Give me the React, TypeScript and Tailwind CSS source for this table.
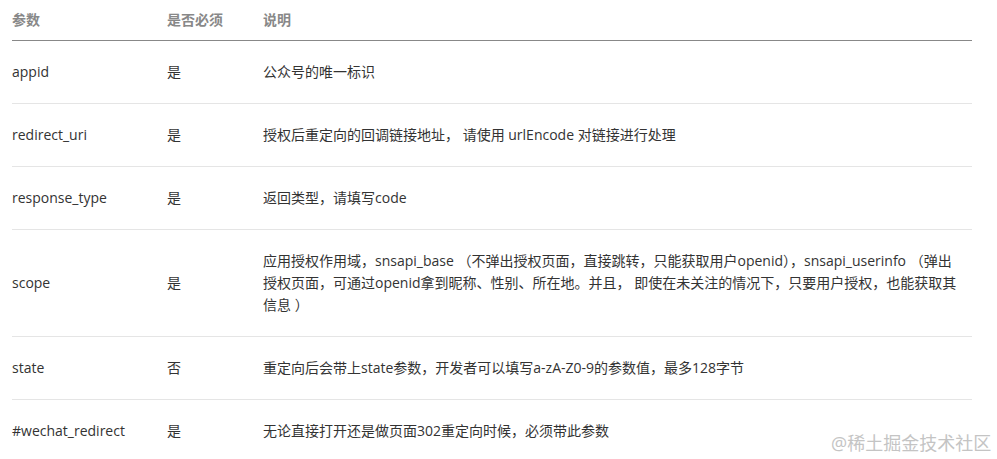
import React from "react";

const font = { fontFamily: '"Open Sans", "Noto Sans CJK SC", sans-serif' };

type Row = { name: string; req: string; desc: React.ReactNode };

const rows: Row[] = [
  { name: "appid", req: "是", desc: "公众号的唯一标识" },
  { name: "redirect_uri", req: "是", desc: "授权后重定向的回调链接地址， 请使用 urlEncode 对链接进行处理" },
  { name: "response_type", req: "是", desc: "返回类型，请填写code" },
  {
    name: "scope",
    req: "是",
    desc: (
      <>
        应用授权作用域，snsapi_base （不弹出授权页面，直接跳转，只能获取用户openid），snsapi_userinfo （弹出
        <br />
        授权页面，可通过openid拿到昵称、性别、所在地。并且， 即使在未关注的情况下，只要用户授权，也能获取其
        <br />
        信息 ）
      </>
    ),
  },
  { name: "state", req: "否", desc: "重定向后会带上state参数，开发者可以填写a-zA-Z0-9的参数值，最多128字节" },
  { name: "#wechat_redirect", req: "是", desc: "无论直接打开还是做页面302重定向时候，必须带此参数" },
];

export default function App() {
  return (
    <div className="relative w-[997px] h-[459px] bg-white overflow-hidden" style={font}>
      <div className="ml-[12px] w-[960px] text-[14px] leading-[22px] text-[#333]">
        <div className="grid grid-cols-[155px_96px_1fr] pt-[9px] pb-[9px] border-b border-[#888] font-bold text-[#888]">
          <div>参数</div>
          <div>是否必须</div>
          <div>说明</div>
        </div>
        {rows.map((r, i) => (
          <div
            key={i}
            className={
              "grid grid-cols-[155px_96px_1fr] items-center py-[20px] " +
              (i < rows.length - 1 ? "border-b border-[#e5e5e5]" : "")
            }
          >
            <div>{r.name}</div>
            <div>{r.req}</div>
            <div className="whitespace-nowrap">{r.desc}</div>
          </div>
        ))}
      </div>
      <div className="absolute left-[831px] top-[430px] text-[18px] leading-[26px] text-[#c4c4c4] whitespace-nowrap">
        @稀土掘金技术社区
      </div>
    </div>
  );
}
